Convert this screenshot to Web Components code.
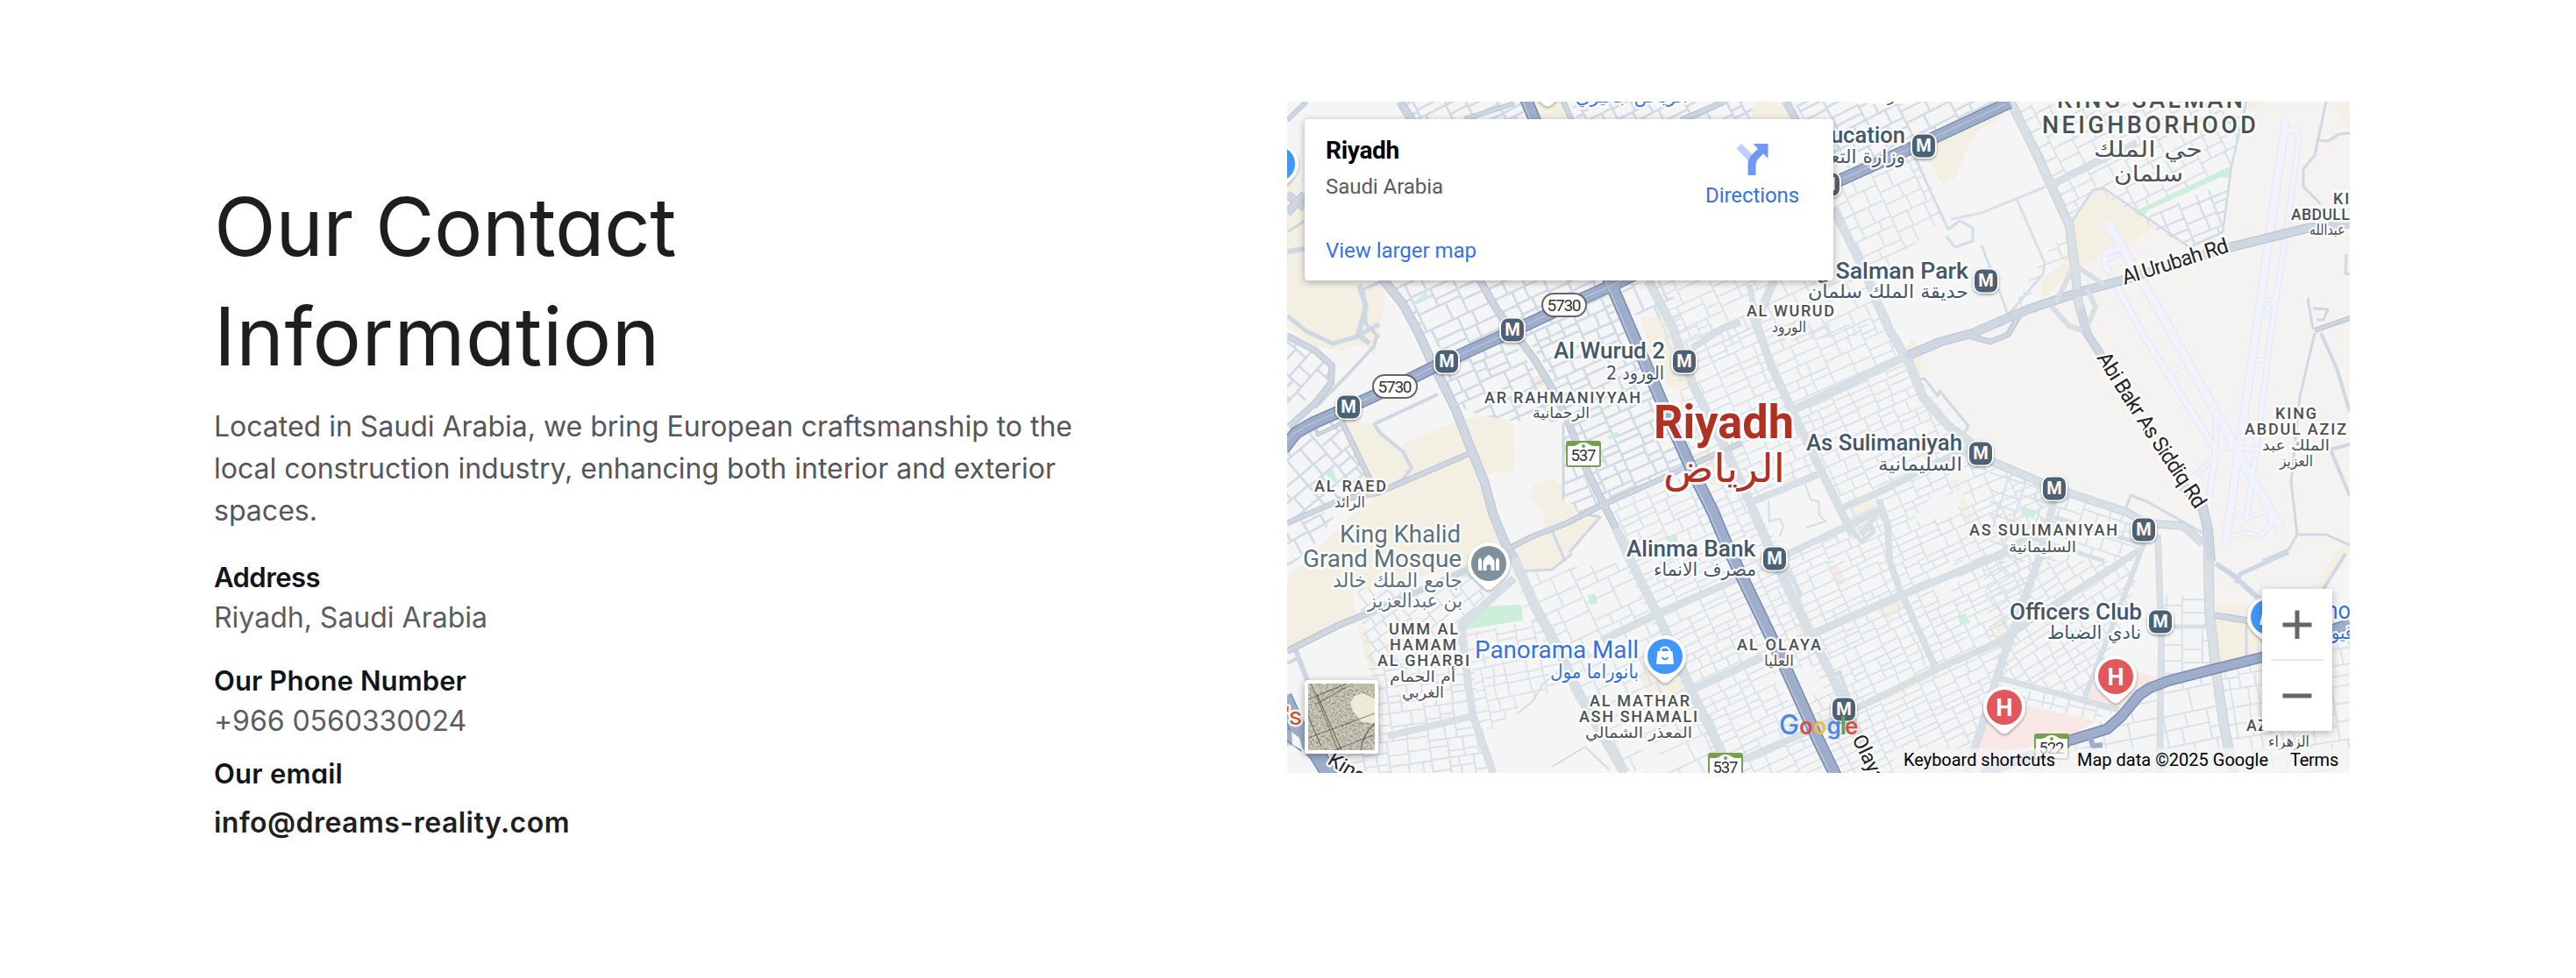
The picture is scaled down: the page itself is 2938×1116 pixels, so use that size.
<!DOCTYPE html>
<html lang="en">
<head>
<meta charset="utf-8">
<title>Contact</title>
<style>
html,body{margin:0;padding:0;background:#fff}
body{width:2938px;height:1116px;overflow:hidden;font-family:Inter,"Liberation Sans",sans-serif}
</style>
</head>
<body>
<contact-section>
  <contact-info slot="info"></contact-info>
  <map-embed slot="map"></map-embed>
</contact-section>
<script>
const define = (name, html, setup) => customElements.define(name, class extends HTMLElement {
  connectedCallback() {
    if (this.shadowRoot) return;
    this.attachShadow({ mode: 'open' }).innerHTML = html;
    if (setup) setup.call(this, this.shadowRoot);
  }
});

define('contact-section', `
<style>
:host{display:flex;box-sizing:border-box;width:2938px;height:1116px;padding:116px 258px 0 244px;justify-content:space-between;align-items:flex-start;background:#fff}
.info{padding-top:80px;width:1100px}
</style>
<div class="info"><slot name="info"></slot></div><slot name="map"></slot>`);

define('contact-info', `
<style>
:host{display:block}
h2{margin:0;font:400 92.5px/124.8px Inter,"Liberation Sans",sans-serif;font-feature-settings:"cv11";color:#1d1e1f;padding-left:0}
p{margin:17px 0 0;font:400 32px/48px Inter,"Liberation Sans",sans-serif;color:#55565c}
fit-text{display:table}
contact-item{margin-top:28px}
</style>
<h2><fit-text width="527">Our Contact</fit-text><fit-text width="509">Information</fit-text></h2>
<p><fit-text width="979">Located in Saudi Arabia, we bring European craftsmanship to the</fit-text><fit-text width="960">local construction industry, enhancing both interior and exterior</fit-text><fit-text width="118">spaces.</fit-text></p>
<contact-item style="margin-top:32px"><fit-text width="121" slot="label">Address</fit-text><fit-text width="312">Riyadh, Saudi Arabia</fit-text></contact-item>
<contact-item><fit-text width="288" slot="label">Our Phone Number</fit-text><fit-text width="288">+966 0560330024</fit-text></contact-item>
<contact-item strong style="margin-top:16px"><fit-text width="147" slot="label">Our email</fit-text><fit-text width="406">info@dreams-reality.com</fit-text></contact-item>`);

define('contact-item', `
<style>
:host{display:flex;flex-direction:column;gap:2px}
.l{font:600 31px/40px Inter,"Liberation Sans",sans-serif;font-feature-settings:"cv11";color:#0f151b}
.v{font:400 32px/48px Inter,"Liberation Sans",sans-serif;color:#5b5c61}
:host([strong]){gap:12px}
:host([strong]) .v{font-weight:600;color:#1e1f20}
</style>
<div class="l"><slot name="label"></slot></div><div class="v"><slot></slot></div>`);

define('place-card', `
<style>
:host{display:flex;justify-content:space-between;box-sizing:border-box;width:603px;height:184px;background:#fff;border-radius:4px;box-shadow:0 2px 8px rgba(0,0,0,.3);padding:20px 39px 0 24px;font:24px/30px Roboto,sans-serif}
.t{font-weight:700;font-size:28px;line-height:32px;color:#000}
.s{color:#5b5b5b;margin-top:10px}
.a{color:#3871e0}
.m{margin-top:43px}
.d{display:flex;flex-direction:column;align-items:center;padding-top:8px}
.d svg{margin-bottom:8px}
</style>
<div><div class="t"><fit-text width="84">Riyadh</fit-text></div><div class="s"><fit-text width="134">Saudi Arabia</fit-text></div><div class="a m"><fit-text width="172">View larger map</fit-text></div></div>
<div class="d"><svg width="37" height="36" viewBox="0 0 37 36"><path d="M0.5 5.5 L6 0 L20 13.5 L15 20.5 Z" fill="#bccffb"/><path d="M13.5 36 V24 Q13.5 17 18.5 12 L25 5.8 L19.5 0 H36.5 V17 L31 11.5 L26 16.5 Q22.500 20 22.500 25 V36 Z" fill="#7199f3"/></svg><div class="a"><fit-text width="107">Directions</fit-text></div></div>`);

define('zoom-control', `
<style>
:host{display:flex;flex-direction:column;align-items:center;width:80px;height:162px;background:#fff;box-shadow:0 2px 8px rgba(0,0,0,.3);border-radius:2px}
.b{height:80px;display:flex;align-items:center}
.r{width:60px;height:2px;background:#e6e6e6}
</style>
<div class="b"><svg width="34" height="34"><path d="M0.500 18H33.500M17 1.500V34" stroke="#666" stroke-width="5"/></svg></div><div class="r"></div><div class="b"><svg width="34" height="34"><path d="M0.500 17H33.500" stroke="#666" stroke-width="5"/></svg></div>`);

define('satellite-toggle', `
<style>:host{display:block;box-sizing:border-box;width:84px;height:84px;border:4px solid #fff;border-radius:4px;box-shadow:0 2px 8px rgba(0,0,0,.35)}svg{display:block}</style>
<svg width="76" height="76" viewBox="0 0 76 76">
<filter id="n" x="0" y="0" width="100%" height="100%"><feTurbulence type="fractalNoise" baseFrequency=".42" numOctaves="3" seed="7"/><feColorMatrix values="1.300 0 0 0 -.05  1.300 0 0 0 -.06  1.300 0 0 0 -.13  0 0 0 0 1"/></filter>
<rect width="76" height="76" fill="#a3a392"/><rect width="76" height="76" filter="url(#n)" opacity=".62"/>
<path d="M53 14 L62 11 76 17V46L60 43 51 31 48 22Z" fill="#f4eedd" opacity=".9"/><path d="M50 0H76V10L62 7Z" fill="#c4bd9f" opacity=".7"/>
<path d="M5 0 L14 20 36 72" stroke="#d9cdb4" stroke-width="6" fill="none" opacity=".45"/>
<path d="M3 0 L11 18 34 76M0 18 L44 0M8 24L44 4M0 62 L76 34M30 76L76 58M0 36L14 70" stroke="#34372f" stroke-width="1.100" fill="none" opacity=".55"/>
<path d="M10 12L38 76M76 45Q62 58 60 76" stroke="#35382f" stroke-width="1.300" fill="none" opacity=".6"/></svg>`);

define('map-credits', `
<style>:host{display:flex;box-sizing:border-box;gap:25px;height:28px;background:rgba(245,245,245,.72);padding:0 13px 0 11px;font:20px/24px Roboto,sans-serif;color:#000;padding-top:1px}</style>
<fit-text width="173">Keyboard shortcuts</fit-text><fit-text width="218">Map data ©2025 Google</fit-text><fit-text width="55">Terms</fit-text>`);

/* ---------- map drawing ---------- */
const BEIGE = [
 '1468,207 1480,207 1488,235 1488,320 1577,323 1580,340 1573,380 1568,407 1557,393 1530,400 1500,395 1468,372',
 '1500,470 1523,425 1517,450 1468,500 1468,490', '1530,475 1568,485 1575,490 1595,510 1610,530 1600,545 1570,562',
 '1600,506 1653,484 1672,477 1707,473 1727,487 1728,537 1690,542 1677,520 1580,560 1572,562 1608,535',
 '1570,567 1677,520 1693,570 1713,617 1722,650 1660,650 1543,675 1547,712 1468,737 1468,660 1540,590',
 '1750,553 1770,545 1785,557 1785,573 1800,583 1787,600 1762,607 1760,583 1743,570',
 '1723,627 1787,600 1827,583 1800,623 1793,632 1770,650 1733,653',
 '1547,710 1560,760 1575,790 1560,720','2387,217 2400,216 2460,260 2370,307 2327,343 2330,317 2357,297 2360,257',
 '2283,122 2253,153 2240,177 2230,203 2215,210 2200,183 2207,163 2250,140 2280,125',
 '2290,130 2260,147 2260,135','1747,116 1783,116 1790,136 1755,136','2002,116 2037,116 2042,136 1998,136',
 '1825,325 1845,325 1860,350 1860,365 1840,350','1872,362 1898,362 1927,440 1910,445 1888,430',
 '1914,455 1920,455 1965,540 1975,560 1950,552','1955,517 1985,503 1990,510 1960,525',
 '2107,570 2133,563 2141,583 2113,593','2110,603 2130,593 2134,607 2113,617','2168,413 2180,385 2192,400 2190,433',
 '2225,548 2232,545 2250,590 2244,595','2528,708 2563,710 2580,720 2580,748 2530,758','2528,688 2567,690 2563,706 2528,702',
 '2640,670 2665,630 2680,616 2680,630 2652,672','1867,767 1913,763 1923,790 1880,792','2035,628 2085,610 2060,622 2035,640',
 '2097,703 2163,676 2177,693 2150,707 2140,697 2107,713','2147,795 2180,770 2212,764 2210,770 2150,800','2047,712 2063,702 2072,720 2050,727',
 '2557,128 2567,116 2587,116 2570,124','2660,116 2680,116 2680,150','2272,710 2290,700 2290,715 2278,725','1950,676 1985,660 1986,665 1950,680',
 '2345,787 2378,795 2378,803 2345,793','2073,815 2100,812 2070,828','1664,732 1675,730 1680,790 1672,790','1635,820 1655,815 1655,820',
 '2430,236 2440,230 2440,237','1870,765 1880,765 1880,780'];
const PINK = ['2250,843 2260,817 2303,803 2390,823 2357,843 2293,857 2243,882','2383,780 2440,767 2460,773 2445,788 2420,807 2380,797',
 '2088,648 2098,646 2105,665 2097,669','1743,433 1757,428 1761,440 1747,445','2033,552 2047,541 2051,549 2037,557','1992,637 2003,635 2000,642'];
const GREEN = ['1673,703 1690,692 1735,690 1737,708 1668,719','2433,242 2543,190 2545,204 2533,202 2450,240 2443,248','1610,347 1627,332 1629,340',
 '1512,542 1520,535 1528,556','1995,363 2003,362 2009,378 2002,381','1833,498 1845,492 1847,497 1835,502','2233,703 2242,700 2247,710 2236,714',
 '2307,578 2322,583 2320,592 2305,587','1810,680 1819,677 1822,688 1815,691','1900,613 1911,609 1914,617 1902,620','1653,655 1675,652 1678,660','2483,116 2490,116 2486,118'];
/* street grids: polygon | angle | colour | width | short block | long block */
const GRIDS = [
 ['1600,116 1742,116 1750,138 1612,138',-27,'#d1dbe5',2.6,11,26],['1792,116 2000,116 1998,138 1800,138',-27,'#d1dbe5',2.6,11,26],
 ['2045,116 2278,116 2100,196 2060,140',-27,'#d2dce5',2.4,10,26],['1585,320 1835,320 1650,404 1617,375',-25,'#d1dbe5',2.6,12,26],
 ['1640,418 1720,384 1768,445 1784,482 1725,480 1690,475 1665,464',-24,'#d1dbe5',2.6,11,26],
 ['1738,380 1832,336 1860,390 1925,532 1832,573 1790,482 1770,430',-24,'#d1dbe5',2.6,10,24],
 ['1845,325 1900,320 1920,362 1870,368',-24,'#d4dde6',2.6,18,40],
 ['1468,505 1525,478 1566,558 1468,592',-40,'#d1dbe5',2.6,13,28],['1468,600 1530,578 1500,620 1468,650',-30,'#d1dbe5',2.6,13,26],
 ['1468,388 1510,408 1518,430 1468,475',-48,'#d1dbe5',2.6,13,28],['1784,485 1815,560 1828,578 1800,585 1784,565',-22,'#d1dbe5',2.6,12,26],
 ['2095,240 2102,212 2186,172 2222,260 2215,300 2150,322 2128,308',-25,'#dbe3e9',1.9,11,28],
 ['1880,320 2130,320 2155,380 1903,400',-25,'#dbe3e9',1.9,13,34],
 ['1905,370 2155,370 2175,412 2245,508 2340,560 2340,640 1860,640 1832,578 1930,540',-24,'#dae2e9',1.7,9,24],
 ['1860,640 2330,640 2280,790 2235,882 1965,882 1855,650',-25,'#dae2e9',1.7,8,23],
 ['1727,655 1860,640 1970,882 1855,882 1740,700',-25,'#dbe3e9',1.9,14,32],
 ['1548,672 1722,650 1665,712 1670,760 1560,760',-38,'#d9e1e8',1.9,12,20],
 ['1560,760 1680,760 1700,882 1520,882 1570,780',-8,'#d9e1e8',1.9,10,20],
 ['1672,722 1765,705 1800,760 1720,835 1690,830',-12,'#dbe3e9',1.8,10,20],
 ['2300,120 2562,116 2545,190 2433,243 2387,215 2360,255',-27,'#d9e1e8',1.9,12,25],
 ['2455,243 2543,206 2535,265 2497,282 2445,254',-22,'#d5dee6',2.2,10,27],
 ['2333,290 2360,260 2360,295 2330,310 2310,350 2290,360',-20,'#dbe3e9',1.9,14,30],
 ['2270,535 2345,558 2438,592 2440,640 2270,640',18,'#d9e1e8',1.8,12,24],
 ['2260,640 2440,640 2428,700 2378,795 2275,770',-32,'#dbe3e9',1.8,9,22],
 ['2465,680 2520,680 2525,765 2465,775',0,'#d9e1e8',1.9,15,28],['2385,830 2440,795 2520,768 2540,882 2300,882 2340,850',-12,'#d9e1e8',1.900,15,32],
 ['2530,768 2680,720 2680,882 2547,882',-9,'#dbe3e9',1.9,13,22],['2270,780 2377,800 2415,812 2385,822 2300,800',14,'#dbe3e9',1.900,9,16]];
const OPEN = ['2000,577 2078,545 2103,598 2035,630','1740,800 1800,792 1850,882 1710,882 1705,830','1880,840 1905,880 1865,882',
 '2180,595 2200,570 2240,560 2230,590','2160,300 2215,250 2260,240 2280,330 2200,350','1475,740 1540,725 1555,790 1520,880 1500,868',
 '2020,770 2070,760 2080,790 2040,800','2200,660 2225,640 2235,660 2215,690'];
const THIN = [['1570,382 1567,395 1535,430 1500,465','#cdd8e2',4],['1578,320 1555,330 1558,370 1573,385','#cdd8e2',4],['1468,265 1488,252','#cdd8e2',3],
 ['1468,287 1488,284','#cdd8e2',6],['1468,360 1490,378 1520,392 1545,385 1573,370','#cdd8e2',5],['1550,325 1558,350 1549,382 1562,392','#cdd8e2',6],
 ['1640,450 1567,484 1575,495 1600,515 1610,534 1600,547 1585,555','#cdd8e2',4],['1783,483 1783,570','#cdd8e2',3],['1770,605 1785,640','#cdd8e2',3],
 ['1800,585 1825,590 1790,630','#cdd8e2',3],['2653,116 2640,177 2627,193 2627,213 2647,233','#cdd9e3',3],['2643,160 2655,161 2668,153 2680,152','#cdd9e3',3],
 ['2632,340 2638,376','#cdd9e3',3],['2638,352 2655,353 2650,365 2642,365','#cdd9e3',3],['2640,380 2623,453 2613,550 2620,610 2610,627 2580,640','#cdd9e3',3],
 ['2620,610 2653,610 2680,622','#cdd9e3',3],['2647,380 2665,420 2680,470','#cdd9e3',4],['2658,513 2680,507','#cdd9e3',4],['2658,513 2680,566','#cdd9e3',4],
 ['2676,290 2675,312 2680,313','#cdd9e3',3],['2610,630 2555,655 2550,665','#cbd7e2',5],['2527,643 2548,657 2580,687','#cbd7e2',6],['2675,632 2650,672','#cdd9e3',4],['2562,710 2562,755','#cdd9e3',3],
 ['2225,250 2260,243 2333,213','#d8e1e8',3],['2182,175 2222,262','#d3dde5',3],['2300,227 2332,300 2330,313','#d8e1e8',3],['2222,262 2235,252 2250,260 2250,275 2230,282 2220,270','#d3dde5',3],
 ['2188,433 2195,432 2210,452 2212,446 2245,486 2240,495','#cfd9e4',3],['2017,572 2018,595 2030,592 2034,600 2030,612','#d3dde5',2],['2058,550 2065,570 2074,572 2075,588 2082,595 2060,602','#d3dde5',2],
 ['2423,585 2430,565 2450,573 2512,608','#cfdae3',3],['2562,116 2545,190 2535,265','#cfdae3',2.5],['2360,257 2387,217 2400,215 2497,282 2535,265','#cfdae3',2.5],
 ['2260,280 2290,358','#d5dfe7',3],['2330,313 2290,360','#d5dfe7',3],['1727,652 1770,650 1793,632','#cfd9e4',3],['1730,815 1748,800 1760,780 1783,762 1795,785','#d3dde5',2],
 ['1770,875 1808,852 1835,878','#d3dde5',2],['1475,735 1500,800 1515,850','#cdd8e2',6],['1468,757 1482,750','#cdd8e2',4],['1468,848 1486,848','#b9c8dc',5]];
/* points | fill | outline | width */
const G='#ced7e1',GE='#b3bdc9',L='#d8e0e6',LE='#d2dbe2';
const ROADS = [
 ['2123,610 2143,583 2155,600',L,LE,4],['2107,600 2123,618 2137,607 2132,595',L,LE,3],
 ['2047,467 2173,407',L,LE,8],['1997,573 2077,540',L,LE,6],['2100,580 2140,563 2220,523 2262,505',L,LE,6],['2033,635 2107,600 2143,583',L,LE,6],
 ['2143,570 2153,600 2155,640 2167,673 2210,767',L,LE,6],['2067,723 2167,680 2280,633 2320,610',L,LE,7],['1827,730 1890,700 1983,660',L,LE,6],
 ['1930,787 2010,750',L,LE,7],['1987,867 2067,833 2120,807 2210,763 2280,733 2327,700 2440,628',L,LE,6],['2243,882 2260,830 2277,773 2327,633 2343,570',L,LE,7],
 ['2260,640 2320,615 2400,640',L,LE,3],['2343,590 2440,620',L,LE,3],
 ['2277,773 2417,810',L,LE,5],['2377,797 2433,653 2445,620',L,LE,4],['2461,610 2465,730 2463,882',L,LE,6],['1583,840 1680,817',L,LE,6],['1727,660 1667,713 1670,747 1680,817 1703,882',L,LE,7],
 ['1930,397 1965,375 1985,368',L,LE,6],['2340,210 2372,195 2437,163',L,LE,6],['2465,715 2527,715',L,LE,3],
 ['2023,320 2003,368 2020,417 2043,467 2080,543 2113,610',L,LE,8],['1995,325 2005,372',L,LE,5],
 ['1880,320 1907,372 1930,437 1950,477 1970,517 1993,567 2023,637 2047,687 2067,727 2090,773 2107,810 2140,882',L,LE,9],['2032,640 2048,668 2053,680 2045,684',L,LE,3],['2092,770 2098,767 2110,800',L,LE,3],
 ['2091,237 2107,270 2127,310 2143,350 2157,380 2177,413 2193,453 2223,487 2245,503 2260,520',L,LE,9],
 ['2260,520 2273,527 2343,557 2427,585 2447,597 2490,600 2512,620',L,'#c3cdd6',8],
 ['2293,116 2320,170 2340,213 2360,257 2367,310 2370,343 2380,380',L,'#c3cdd6',9],
 ['2518,603 2520,697 2527,763 2537,830 2547,882',L,'#c3cdd6',10],['2525,702 2562,708',G,GE,6],
 ['1468,137 1490,116',G,GE,4],['1670,136 1727,118',G,GE,4],['1783,116 1793,138',G,GE,5],['1917,137 1967,116',G,GE,5],['2037,116 2049,138',G,GE,7],
 ['1468,222 1488,237',G,GE,8],['1468,243 1488,222',G,GE,8],
 ['1468,383 1500,400 1519,417 1518,437 1500,460 1470,487',G,GE,6],['1530,480 1570,563',G,GE,5],['1530,483 1503,496 1500,488',G,GE,3],['1468,597 1530,570 1570,563 1677,517',G,GE,5],
 ['1720,626 1748,612 1787,597 1830,575 1880,553 1923,533 1987,505',G,GE,5],['1468,743 1530,712 1560,700',G,GE,6],['1560,700 1673,650',G,LE,6],
 ['1597,116 1612,140',G,GE,8],['1577,318 1600,347 1617,378 1633,413 1660,467 1678,513 1693,550 1703,587 1718,623 1727,637',G,GE,9],
 ['1727,637 1750,690 1773,733 1800,790 1827,837 1853,882',L,LE,10],
 ['1687,318 1707,353 1730,383 1750,410 1770,443 1787,477 1810,537 1830,577 1843,603',G,GE,7],['1843,603 1860,640 1890,700 1910,743 1930,790 1963,857 1973,882',L,LE,9],
 ['2173,407 2213,390 2250,380 2313,353 2373,333 2420,320 2540,283 2633,260 2680,255',G,GE,9],['2245,383 2270,390 2290,382 2305,357',G,GE,5],
 ['2345,345 2362,310 2370,305 2400,325',L,LE,4],['2340,350 2360,372 2378,378 2390,350 2380,330',L,LE,4],
 ['2373,353 2380,380 2393,400 2400,412',G,GE,8],['2490,555 2512,578 2518,603 2521,640',G,GE,10],['2640,377 2680,363',G,GE,4]];
const H='#9dadca',HE='#6f84b0';
const HIGHWAYS = [
 ['1740,112 1750,136 1837,323 1880,423 1903,477 1930,537 1953,583 1973,630 1980,644 2018,723 2040,770 2073,843 2094,886',12],
 ['1464,512 1478,494 1497,483 1538,465 1593,440 1633,420 1650,412 1725,378 1793,346 1840,325 1900,296 2100,205 2193,163 2292,117',12],
 ['2330,860 2360,845 2403,832 2420,817 2440,793 2452,785 2473,777 2527,763 2580,750 2640,725 2680,712',10],
 ['1464,795 1482,835 1502,860 1518,886',17],['1464,835 1485,850 1510,868',11]];
const RUNWAYS = [['2403,253 2467,362 2553,517 2602,605',9],['2607,137 2588,270 2573,380 2550,537 2538,622',8],['2608,150 2620,148 2622,160 2607,267 2590,380 2575,503 2562,590',5],
 ['2420,283 2402,287 2400,300 2443,380 2527,513 2520,568',6],['2403,296 2418,290',4],['2473,427 2490,417',5],['2527,477 2527,515 2543,510 2577,513',5],['2530,518 2503,543',4],
 ['2548,583 2562,592 2587,582 2590,598 2578,612 2560,607 2545,613',4],['2573,411 2588,411',4],['2595,265 2605,262',3],['2580,342 2594,342 2580,360',3],['2562,475 2575,510',3]];
const A='"DejaVu Sans","Noto Sans",sans-serif';
const D='#4b5055',S='#44566b';
/* text | left | right | baseline | size | colour | weight | letter-spacing */
const LABELS = [
 ['KING SALMAN',2346,2558,123,27,D,500,2.5],['NEIGHBORHOOD',2329,2573,152,27,D,500,3],['حي الملك',2388,2512,179,27,D],['سلمان',2411,2490,207,27,D],
 ['AL WURUD',1992,2092,361,18,D,500,2],['الورود',2021,2060,379,19,D],['Al Wurud 2',1772,1899,409,25,S,500],['الورود 2',1832,1898,433,23,S],
 ['AR RAHMANIYYAH',1693,1871,460,18,D,500,2],['الرحمانية',1748,1813,477,19,D],['AL RAED',1499,1581,561,18,D,500,2],['الرائد',1522,1557,579,19,D],
 ['King Khalid',1528,1666,619,28,'#5a7180',400],['Grand Mosque',1486,1667,647,28,'#5a7180',400],['جامع الملك خالد',1520,1668,670,24,'#5a7180'],['بن عبدالعزيز',1560,1668,693,24,'#5a7180'],
 ['UMM AL',1584,1663,724,18,D,500,2],['HAMAM',1585,1661,742,18,D,500,2],['AL GHARBI',1571,1676,760,18,D,500,2],['أم الحمام',1585,1660,778,19,D],['الغربي',1599,1647,796,19,D],
 ['Panorama Mall',1682,1869,751,28,'#3871dd',400],['بانوراما مول',1768,1869,774,24,'#3871dd'],
 ['AL MATHAR',1813,1927,806,18,D,500,2],['ASH SHAMALI',1801,1936,824,18,D,500,2],['المعذر الشمالي',1808,1930,842,19,D],
 ['AL OLAYA',1981,2077,742,18,D,500,2],['العليا',2012,2046,760,19,D],['Alinma Bank',1855,2002,635,25,S,500],['مصرف الانماء',1886,2003,657,23,S],
 ['As Sulimaniyah',2060,2238,514,25,S,500],['السليمانية',2142,2238,537,23,S],['AS SULIMANIYAH',2246,2415,611,18,D,500,2],['السليمانية',2291,2368,630,19,D],
 ['Officers Club',2292,2443,707,25,S,500],['نادي الضباط',2335,2442,729,23,S],['King Salman Park',2033,2245,318,25,S,500],['حديقة الملك سلمان',2062,2245,340,23,S],
 ['Ministry of Education',1930,2173,163,25,S,500],['وزارة التعليم',2060,2173,186,23,S],
 ['KING',2661,2708,233,18,D,500,2],['ABDULLAH',2613,2705,251,18,D,500,2],['الملك عبدالله',2634,2712,268,19,D],
 ['KING',2595,2642,478,18,D,500,2],['ABDUL AZIZ',2560,2676,496,18,D,500,2],['الملك عبد',2580,2657,514,19,D],['العزيز',2600,2638,532,19,D],
 ["'s",1466,1485,827,28,'#c5531d',400],['Casino',2603,2681,706,28,'#3871dd',400],['قيو',2659,2684,729,23,'#3871dd'],
 ['الرياض جاليري',1797,1925,117,22,'#3871dd'],['المرسلات',2112,2182,116,18,D],['AZ ZAHRA',2562,2658,834,18,D,500,2],['الزهراء',2587,2634,852,19,D],
 ['Riyadh',1886,2046,500,53,'#b03022',700],['الرياض',1897,2036,550,48,'#b03022']];
const METRO = [[1538,464],[1650,412],[1725,376],[1921,412],[2194,166],[2085,210],[2265,320],[2259,517],[2343,557],[2445,604],[2024,637],[2103,809],[2464,709]];

define('map-canvas', `<style>:host{display:block;width:1212px;height:766px;overflow:hidden}svg{display:block}</style><svg width="1212" height="766" viewBox="1468 116 1212 766"></svg>`, function (root) {
  let seed = 12345;
  const rnd = () => (seed = (seed * 16807) % 2147483647) / 2147483647;
  const pts = s => s.split(' ').map(p => p.split(',').map(Number));
  const poly = (list, fill) => list.map(p => `<polygon points="${p}" fill="${fill}"/>`).join('');
  const line = (p, c, w, extra = '') => `<polyline points="${p}" fill="none" stroke="${c}" stroke-width="${w}" stroke-linejoin="round" ${extra}/>`;
  const blocks = (x0, y0, x1, y1, a, b) => {
    const w = x1 - x0, h = y1 - y0, f = .35 + rnd() * .3;
    if (w > 110 || h > 110 || (w > b * 1.3 && w * a > h * b * .7) || (w > a * 2 && h > a * 2 && w > h * 1.7)) {
      if (w >= h) { const m = x0 + w * f; return `M${m.toFixed(1)} ${y0.toFixed(1)}V${y1.toFixed(1)}` + blocks(x0, y0, m, y1, a, b) + blocks(m, y0, x1, y1, a, b); }
    }
    if (h > a * 1.8 && h * 1.5 > w * .5) { const m = y0 + h * f; return `M${x0.toFixed(1)} ${m.toFixed(1)}H${x1.toFixed(1)}` + blocks(x0, y0, x1, m, a, b) + blocks(x0, m, x1, y1, a, b); }
    if (w > b * 1.4) { const m = x0 + w * f; return `M${m.toFixed(1)} ${y0.toFixed(1)}V${y1.toFixed(1)}` + blocks(x0, y0, m, y1, a, b) + blocks(m, y0, x1, y1, a, b); }
    return '';
  };
  let s = '<rect x="1468" y="116" width="1212" height="766" fill="#f5f5f5"/>';
  s += poly(['2175,412 2245,384 2260,375 2370,335 2330,318 2370,305 2460,260 2497,282 2535,265 2562,116 2680,116 2680,640 2640,680 2525,690 2520,610 2430,580 2265,515 2205,455'], '#f5f3f1');
  s += poly(BEIGE, '#f4efe3') + poly(PINK, '#f8e7e4');
  GRIDS.forEach(([p, ang, c, w, a, b], i) => {
    const q = pts(p), xs = q.map(k => k[0]), ys = q.map(k => k[1]);
    const cx = (Math.min(...xs) + Math.max(...xs)) / 2, cy = (Math.min(...ys) + Math.max(...ys)) / 2;
    const r = Math.hypot(Math.max(...xs) - cx, Math.max(...ys) - cy);
    s += `<clipPath id="g${i}"><polygon points="${p}"/></clipPath><g clip-path="url(#g${i})"><path transform="rotate(${ang} ${cx} ${cy})" d="${blocks(cx - r, cy - r, cx + r, cy + r, a, b)}" stroke="${c}" stroke-width="${w}" fill="none"/></g>`;
  });
  s += poly(OPEN, '#f5f5f5') + poly(GREEN, '#cdeeda');
  THIN.forEach(t => s += line(...t));
  RUNWAYS.forEach(([p, w]) => s += line(p, '#e3e6f0', w + 2));
  RUNWAYS.forEach(([p, w]) => s += line(p, '#f0f3fd', w));
  ROADS.forEach(([p, f, e, w]) => s += line(p, e, w + 1.6));
  ROADS.forEach(([p, f, e, w]) => s += line(p, f, w));
  s += line('2260,884 2300,868 2345,853', '#bcc8da', 12);
  HIGHWAYS.forEach(([p, w]) => s += line(p, HE, w + 2.5));
  HIGHWAYS.forEach(([p, w]) => s += line(p, H, w));
  HIGHWAYS.slice(0, 2).forEach(([p]) => s += line(p, '#c2cde0', 1, 'transform="translate(-4 1.500)"'));
  s += line('2384,842 2387,851 2398,850', H, 6) + poly(['1473,835 1482,842 1486,856 1474,850'], '#f5f5f5') + poly(['1483,852 1492,860 1486,862'], '#f5efe0');

  const route = (x, y, t) => `<rect x="${x}" y="${y}" width="50" height="26" rx="13" fill="#fff" stroke="#666" stroke-width="2"/><text x="${x + 25}" y="${y + 20}" font-size="19" text-anchor="middle" fill="#333" textLength="39">${t}</text>`;
  const shield = (x, y, t) => `<rect x="${x}" y="${y}" width="40" height="30" rx="3" fill="#75a04e"/><path d="M${x + 2} ${y + 6}H${x + 9}Q${x + 12} ${y + 6} ${x + 15} ${y + 3}Q${x + 20} ${y + 1} ${x + 25} ${y + 3}Q${x + 28} ${y + 6} ${x + 31} ${y + 6}H${x + 38}V${y + 28}H${x + 2}Z" fill="#fff"/><circle cx="${x + 20}" cy="${y + 6}" r="2" fill="#75a04e"/><text x="${x + 20}" y="${y + 23}" font-size="18.5" text-anchor="middle" fill="#333" textLength="29">${t}</text>`;
  s += route(1759, 335, 5730) + route(1566, 428, 5730) + shield(1786, 503, 537) + shield(1948, 859, 537) + shield(2320, 837, 522);

  const pin = (x, y, c, g) => `<g filter="url(#sh)"><path d="M${x - 17} ${y + 17}A24 24 0 1 1 ${x + 17} ${y + 17}L${x + 4} ${y + 29}Q${x} ${y + 31.5} ${x - 4} ${y + 29}Z" fill="#fff"/></g><circle cx="${x}" cy="${y}" r="20" fill="${c}"/>${g}`;
  s += '<filter id="sh" x="-30%" y="-30%" width="160%" height="160%"><feDropShadow dx="0" dy="1.500" stdDeviation="1.800" flood-color="#000" flood-opacity=".38"/></filter>';
  const txt = 'paint-order="stroke" stroke="#fff" stroke-opacity=".88" stroke-linejoin="round"';
  LABELS.forEach(([t, x0, x1, y, fs, c, w, ls]) => {
    const ar = /[\u0600-\u06ff]/.test(t);
    s += `<text ${ar ? `direction="ltr" font-family='${A}'` : ''} x="${x0}" y="${y}" font-size="${ar ? fs * .92 : fs}" font-weight="${w || 400}" fill="${c}" ${txt} stroke-width="${fs > 40 ? 6 : 5}" ${ls ? `letter-spacing="${ls}"` : ''} textLength="${x1 - x0 + (ls || 0)}" lengthAdjust="${ls ? 'spacing' : 'spacingAndGlyphs'}">${t}</text>`;
  });
  s += `<text transform="translate(2423 325) rotate(-17.500)" font-size="24" fill="#202124" ${txt} stroke-width="5" textLength="126">Al Urubah Rd</text>`;
  s += `<path id="abr" d="M2391 408Q2420 455 2449 499Q2480 545 2506 585" fill="none"/><text font-size="24" fill="#202124" ${txt} stroke-width="5" textLength="207"><textPath href="#abr">Abi Bakr As Siddiq Rd</textPath></text>`;
  s += `<text transform="translate(1513 871) rotate(31)" font-size="23" fill="#202124" ${txt} stroke-width="5">King Fahd Rd</text>`;
  s += `<text transform="translate(2112 843) rotate(64)" font-size="23" fill="#202124" ${txt} stroke-width="5">Olaya St</text>`;
  METRO.forEach(([x, y]) => s += `<g filter="url(#sh)"><rect x="${x - 15}" y="${y - 14}" width="30" height="29" rx="10" fill="#fff"/></g><rect x="${x - 13}" y="${y - 12.5}" width="26" height="26" rx="8" fill="#4d6176"/><text x="${x}" y="${y + 7}" font-size="20" font-weight="700" fill="#fff" text-anchor="middle">M</text>`);
  s += pin(1698, 643, '#7d909c', '<path d="M1686 651V639L1688 636 1690 639V651ZM1706 651V639L1708 636 1710 639V651ZM1691.500 651V641Q1692 637 1698 633Q1704 637 1704.500 641V651H1700.500V646Q1698 642 1695.500 646V651Z" fill="#fff"/>');
  s += pin(1899, 749, '#4196fa', '<path d="M1890.500 743H1907.500L1909 758H1889Z" fill="#fff"/><path d="M1894 744V743Q1894 738.500 1899 738.500Q1904 738.500 1904 743V744" fill="none" stroke="#fff" stroke-width="2"/><path d="M1895.500 750Q1899 755 1902.500 750" fill="none" stroke="#4196fa" stroke-width="2"/>');
  const h = (x, y) => `<text x="${x}" y="${y + 9.5}" font-size="27" font-weight="700" fill="#fff" text-anchor="middle">H</text>`;
  s += pin(2413, 772, '#e2575b', h(2413, 772)) + pin(2286, 807, '#e2575b', h(2286, 807));
  s += pin(1457, 187, '#4196fa', '') + pin(2587, 704, '#4196fa', '<path d="M2577 713L2580 700H2590V713Z" fill="#fff"/>') + pin(1765, 91, '#4196fa', '');
  s += `<g font-family="Inter,sans-serif" font-size="29" font-weight="600"><text y="838"><tspan x="2029" font-size="31" font-weight="500" fill="#4f86ec">G</tspan><tspan x="2052" font-size="26" fill="#d94f3f">o</tspan><tspan x="2067.500" font-size="26" fill="#f0bd42">o</tspan><tspan x="2083.500" font-size="26" fill="#4f86ec">g</tspan><tspan x="2098.500" fill="#58a55c">l</tspan><tspan x="2104" font-size="26" fill="#d94f3f">e</tspan></text></g>`;
  const svg = root.querySelector('svg');
  svg.setAttribute('font-family', 'Roboto,sans-serif');
  svg.innerHTML = s;
});

define('map-embed', `
<style>
:host{display:grid;grid-template:766px/1212px;position:relative;overflow:hidden}
place-card{position:absolute;left:20px;top:20px}
zoom-control{position:absolute;right:20px;top:556px}
satellite-toggle{position:absolute;left:20px;bottom:22px}
map-credits{position:absolute;right:0;bottom:0}
</style>
<map-canvas></map-canvas><place-card></place-card><satellite-toggle></satellite-toggle><map-credits></map-credits><zoom-control></zoom-control>`);

/* single line of text tracked out to a given width */
customElements.define('fit-text', class extends HTMLElement {
  connectedCallback() {
    if (this.shadowRoot) return;
    this.attachShadow({ mode: 'open' }).innerHTML = '<style>:host{display:table;white-space:nowrap}</style><slot></slot>';
    const natural = this.getBoundingClientRect().width;
    this.style.letterSpacing = ((+this.getAttribute('width') - natural) / this.textContent.length).toFixed(3) + 'px';
  }
});
</script>
</body>
</html>
